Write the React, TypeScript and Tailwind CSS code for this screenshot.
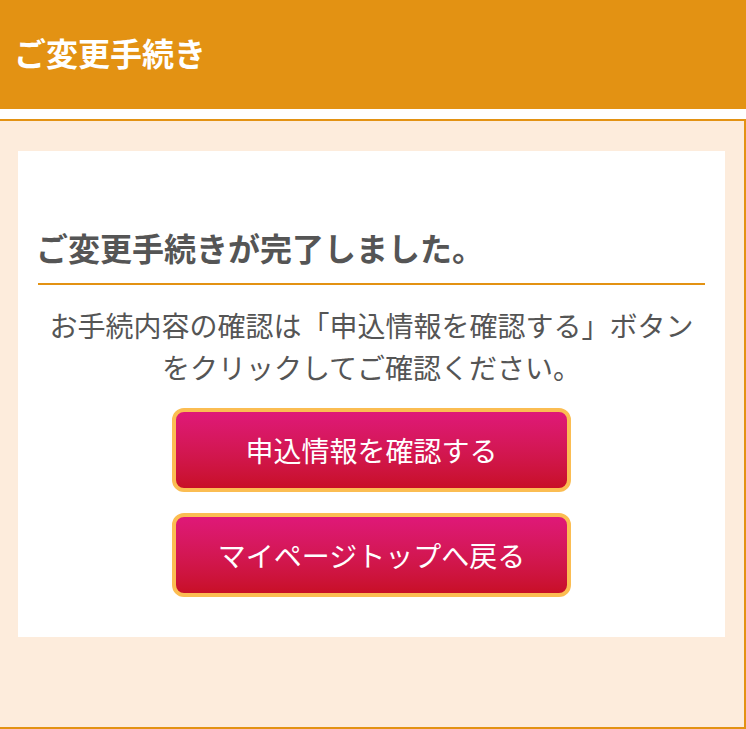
import React from 'react';

const font = "font-['Meiryo','Noto_Sans_CJK_JP',sans-serif]";

const ActionButton: React.FC<{ label: string }> = ({ label }) => (
  <button
    type="button"
    className="w-[399px] h-[84px] rounded-[12px] border-4 border-[#fbbd52] bg-gradient-to-b from-[#df1878] to-[#c80f26] text-white text-[28px] flex items-center justify-center"
  >
    {label}
  </button>
);

export default function App() {
  return (
    <div className={`${font} min-h-[729px] bg-white`}>
      {/* Header */}
      <header className="h-[109px] bg-[#e39213] flex items-center pl-[14px] pb-[5px]">
        <h1 className="text-white text-[32px] font-bold">ご変更手続き</h1>
      </header>

      {/* Content */}
      <div className="mt-[10px] border-t-2 border-r-2 border-b-2 border-[#e39213] bg-[#fdecdc] pt-[30px] pl-[18px] pr-[19px] pb-[90px]">
        <div className="bg-white px-[20px] pt-[74px] pb-[40px]">
          <h2 className="text-[#555] text-[32px] font-bold leading-[45px] pb-[13px] border-b-2 border-[#e39213]">
            <span className="-ml-[2px]">ご変更手続きが完了しました。</span>
          </h2>
          <p className="text-[#555] text-[28px] leading-[42px] text-center mt-[19px]">
            お手続内容の確認は「申込情報を確認する」ボタン
            <br />
            をクリックしてご確認ください。
          </p>
          <div className="flex flex-col items-center gap-[21px] mt-[20px]">
            <ActionButton label="申込情報を確認する" />
            <ActionButton label="マイページトップへ戻る" />
          </div>
        </div>
      </div>
    </div>
  );
}
